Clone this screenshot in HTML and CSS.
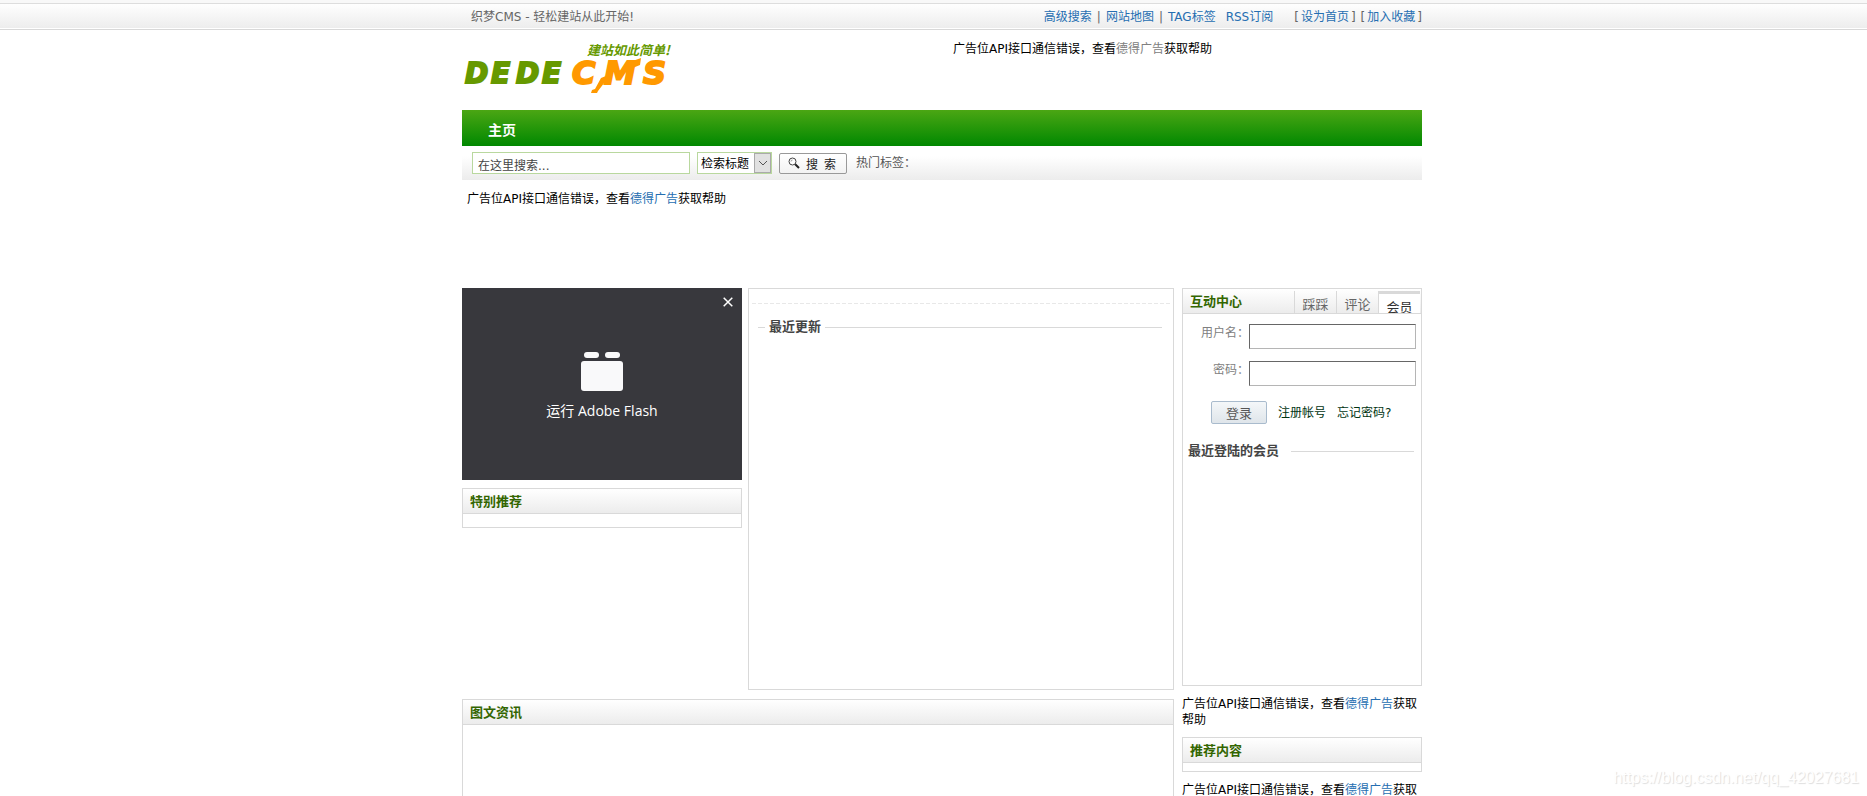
FILE: index.html
```html
<!DOCTYPE html>
<html lang="zh-CN">
<head>
<meta charset="utf-8">
<title>织梦CMS</title>
<link rel="stylesheet" href="styles.css">
</head>
<body>
<div class="page">
  <div class="topbar">
    <div class="wrap topbar-inner">
      <span class="slogan">织梦CMS - 轻松建站从此开始!</span>
      <div class="toplinks">
        <a href="#">高级搜索</a><span class="sep">|</span><a href="#">网站地图</a><span class="sep">|</span><a href="#">TAG标签</a><a class="rss" href="#">RSS订阅</a>
        <span class="fav"><span>[</span><a href="#">设为首页</a><span>]</span></span>
        <span class="fav next"><span>[</span><a href="#">加入收藏</a><span>]</span></span>
      </div>
    </div>
  </div>

  <header class="wrap header">
    <a class="logo" href="#" aria-label="DEDECMS">
      <svg width="214" height="60" viewBox="0 0 214 60">
        <text class="logo-tag" x="125" y="17">建站如此简单!</text>
        <text class="logo-dede" x="3 29 54 80" y="45">DEDE</text>
        <text class="logo-cms" x="110 142 181" y="46">CMS</text>
        <path d="M139 40 L149 36 L136 53 L135 55 L129 55 L130 52 L133 51 Z M165 25 L179 20 L178 27 L168 31 Z" fill="#ff9900"/>
      </svg>
    </a>
    <p class="ad header-ad">广告位API接口通信错误，查看<a class="muted" href="#">德得广告</a>获取帮助</p>
  </header>

  <nav class="wrap nav"><a href="#">主页</a></nav>

  <form class="wrap search">
    <input class="keyword" type="text" aria-label="搜索" value="在这里搜索...">
    <span class="select-box">
      <select aria-label="检索范围"><option>检索标题</option></select>
      <span class="arrow"><svg width="10" height="6" viewBox="0 0 10 6"><path d="M1 1 L5 5 L9 1" fill="none" stroke="#555"/></svg></span>
    </span>
    <button class="search-btn" type="button">
      <svg width="12" height="12" viewBox="0 0 12 12"><circle cx="4.5" cy="4.5" r="3.5" fill="#fff" stroke="#444"/><path d="M3 4.5 A1.5 1.5 0 0 1 4.5 3" fill="none" stroke="#999"/><path d="M7.2 7.2 L11 11" stroke="#222" stroke-width="2"/></svg>
      <span>搜</span><span>索</span>
    </button>
    <span class="hot">热门标签：</span>
  </form>

  <div class="wrap banner"><p class="ad">广告位API接口通信错误，查看<a href="#">德得广告</a>获取帮助</p></div>

  <main class="wrap main">
    <div class="content">
      <div class="upper">
        <div class="left">
          <div class="flash">
            <button class="close" type="button" aria-label="关闭"><svg width="10" height="10" viewBox="0 0 10 10"><path d="M.7 .7 L9.3 9.3 M9.3 .7 L.7 9.3" stroke="#fff" stroke-width="1.5"/></svg></button>
            <svg width="42" height="39" viewBox="0 0 42 39"><g fill="#f9f9fa"><rect x="3" width="15" height="6" rx="3"/><rect x="24" width="15" height="6" rx="3"/><rect y="9" width="42" height="30" rx="3"/></g></svg>
            <p>运行 Adobe Flash</p>
          </div>
          <section class="box"><h2>特别推荐</h2><div class="box-body small"></div></section>
        </div>
        <section class="latest">
          <div class="dash"></div>
          <h2 class="legend"><span>最近更新</span></h2>
        </section>
      </div>
      <section class="box pics"><h2>图文资讯</h2></section>
    </div>

    <aside class="side">
      <section class="box member">
        <div class="member-head">
          <h3>互动中心</h3>
          <div class="tabs"><a href="#">踩踩</a><a href="#">评论</a><a class="active" href="#">会员</a></div>
        </div>
        <form class="login">
          <div class="field"><label for="user">用户名：</label><input id="user" type="text"></div>
          <div class="field"><label for="pwd">密码：</label><input id="pwd" type="password"></div>
          <div class="actions"><button type="button">登录</button><a href="#">注册帐号</a><a href="#">忘记密码?</a></div>
        </form>
        <h2 class="legend recent"><span>最近登陆的会员</span></h2>
      </section>
      <p class="ad">广告位API接口通信错误，查看<a href="#">德得广告</a>获取帮助</p>
      <section class="box"><h2>推荐内容</h2><div class="box-body tiny"></div></section>
      <p class="ad">广告位API接口通信错误，查看<a href="#">德得广告</a>获取帮助</p>
    </aside>
  </main>
  <div class="watermark">https://blog.csdn.net/qq_42027681</div>
</div>
</body>
</html>
```
FILE: styles.css
```css
* { box-sizing: border-box; }
body, p, h2, h3 { margin: 0; }
body { font-size: 12px; line-height: 16px; color: #000; background: #fff; }
body, button, input, select { font-family: Verdana, "DejaVu Sans", "Noto Sans CJK SC", sans-serif; }
a { color: #256eb1; text-decoration: none; }
svg { display: block; }
.page {
  position: relative;
  height: 100vh;
  overflow: hidden;
  padding-left: 17px;
}
.wrap { max-width: 960px; margin: 0 auto; }

.topbar {
  height: 30px;
  margin-left: -17px;
  padding-left: 17px;
  border-top: 3px solid #f8f8f8;
  border-bottom: 1px solid #d8d8d8;
  background: linear-gradient(#fff, #ececec);
  box-shadow: inset 0 1px #ddd, inset 0 -1px #fff;
}
.topbar-inner {
  display: flex;
  justify-content: space-between;
  align-items: center;
  height: 27px;
  padding-left: 9px;
  color: #666;
}
.toplinks { display: flex; }
.sep { padding: 0 5px; }
.rss { margin-left: 10px; }
.fav { display: flex; gap: 2px; margin-left: 21px; }
.fav.next { margin-left: 5px; }

.header { display: flex; justify-content: space-between; height: 80px; padding-top: 8px; }
.header-ad { width: 469px; padding-top: 3px; }
.muted { color: #808080; }
.logo-tag { font: italic bold 13px "Noto Sans CJK SC", sans-serif; fill: #669900; }
.logo-dede, .logo-cms {
  font: italic bold 28px "DejaVu Sans", sans-serif;
  fill: #669900;
  stroke: #669900;
  stroke-width: 2;
}
.logo-cms { font-size: 32px; fill: #ff9900; stroke: #ff9900; }

.nav {
  display: flex;
  align-items: center;
  height: 36px;
  padding: 4px 26px 0;
  background: linear-gradient(#4ba614, #008800);
}
.nav a { color: #fff; font-size: 14px; font-weight: bold; }

.search {
  display: flex;
  align-items: center;
  height: 34px;
  padding-left: 10px;
  background: linear-gradient(#fff 30%, #ececec);
}
.keyword {
  width: 218px;
  height: 22px;
  padding: 2px 5px 0;
  border: 1px solid #b9d89e;
  background: #fff;
  color: #444;
  font-size: 12px;
}
.select-box {
  display: grid;
  width: 75px;
  height: 22px;
  margin: 0 7px;
  border: 1px solid #b9d89e;
  background: #fff;
}
.select-box select {
  grid-area: 1 / 1;
  appearance: none;
  border: 0;
  padding: 2px 3px 0;
  background: none;
  color: #000;
  font-size: 12px;
}
.arrow {
  grid-area: 1 / 1;
  justify-self: end;
  display: grid;
  place-items: center;
  width: 17px;
  border: 1px solid #aaa;
  background: #e1e1e1;
  pointer-events: none;
}
.search-btn {
  display: flex;
  align-items: center;
  gap: 6px;
  width: 68px;
  height: 21px;
  padding: 0 0 0 8px;
  border: 1px solid #999;
  border-radius: 2px;
  background: linear-gradient(#fff, #f2f2f2);
  color: #222;
  font-size: 12px;
  white-space: nowrap;
}
.hot { margin-left: 9px; color: #555; }

.banner { height: 108px; padding: 11px 5px; }

.main { display: flex; gap: 8px; }
.content { flex: 1; }
.upper { display: flex; gap: 6px; }
.left { width: 280px; }
.flash {
  position: relative;
  display: flex;
  flex-direction: column;
  align-items: center;
  height: 192px;
  margin-bottom: 8px;
  padding-top: 64px;
  background: #38383d;
  color: #fff;
}
.flash p { margin-top: 10px; font: 14px/20px "Open Sans", "Noto Sans CJK SC", sans-serif; }
.close { position: absolute; top: 9px; right: 9px; padding: 0; border: 0; background: none; }
.box { border: 1px solid #d9d9d9; }
.box > h2, .member-head {
  height: 25px;
  border-bottom: 1px solid #d9d9d9;
  background: linear-gradient(#fff, #ececec);
}
.box > h2, .member-head h3 {
  padding-left: 7px;
  color: #336600;
  font-size: 13px;
  line-height: 25px;
}
.box > .legend { background: none; }
.small { height: 13px; }
.tiny { height: 8px; }
.latest { flex: 1; height: 402px; border: 1px solid #d9d9d9; padding: 14px 3px; }
.dash {
  height: 1px;
  background: repeating-linear-gradient(90deg, #e8e8e8 0 4px, transparent 4px 6px);
}
.legend { display: flex; align-items: center; color: #444; font-size: 13px; line-height: 20px; }
.legend::after { content: ""; flex: 1; height: 1px; background: #d9d9d9; }
.latest .legend { margin: 13px 8px 0 6px; gap: 4px; }
.latest .legend::before { content: ""; width: 7px; height: 1px; background: #d9d9d9; }
.pics { height: 240px; margin-top: 9px; }

.side { width: 240px; }
.member { height: 398px; margin-bottom: 10px; }
.member-head { display: flex; justify-content: space-between; overflow: hidden; }
.tabs { display: flex; margin-top: 2px; padding-right: 1px; }
.tabs a {
  width: 42px;
  border-left: 1px solid #d9d9d9;
  color: #666;
  font-size: 13px;
  line-height: 27px;
  text-align: center;
}
.tabs .active { border-top: 3px solid #d9d9d9; background: #fff; color: #333; }
.login { padding: 10px 5px 0; }
.field { display: flex; justify-content: flex-end; margin-bottom: 12px; }
.field label { color: #808080; line-height: 18px; }
.field input {
  width: 167px;
  height: 25px;
  border: 1px solid #b5b5b5;
  border-top-color: #666;
  border-left-color: #666;
}
.actions { display: flex; align-items: center; gap: 11px; padding: 3px 0 0 23px; }
.actions button {
  width: 56px;
  height: 23px;
  padding: 0;
  border: 1px solid #a9bbcd;
  border-radius: 2px;
  background: linear-gradient(#f4f7f9, #dfe5ea);
  color: #555;
  font-size: 13px;
}
.actions a { color: #003311; }
.box > .recent { height: 20px; margin: 17px 7px 0 5px; border: 0; padding: 0; gap: 12px; line-height: 20px; color: #444; }
.side .ad { margin-bottom: 9px; }
.side .box + .ad { margin-top: 10px; }

.watermark {
  position: absolute;
  right: 8px;
  bottom: 8px;
  color: #fff;
  font: 16px/20px "Liberation Sans", Arial, sans-serif;
  text-shadow: 1px 1px 1px #ddd;
}
```
